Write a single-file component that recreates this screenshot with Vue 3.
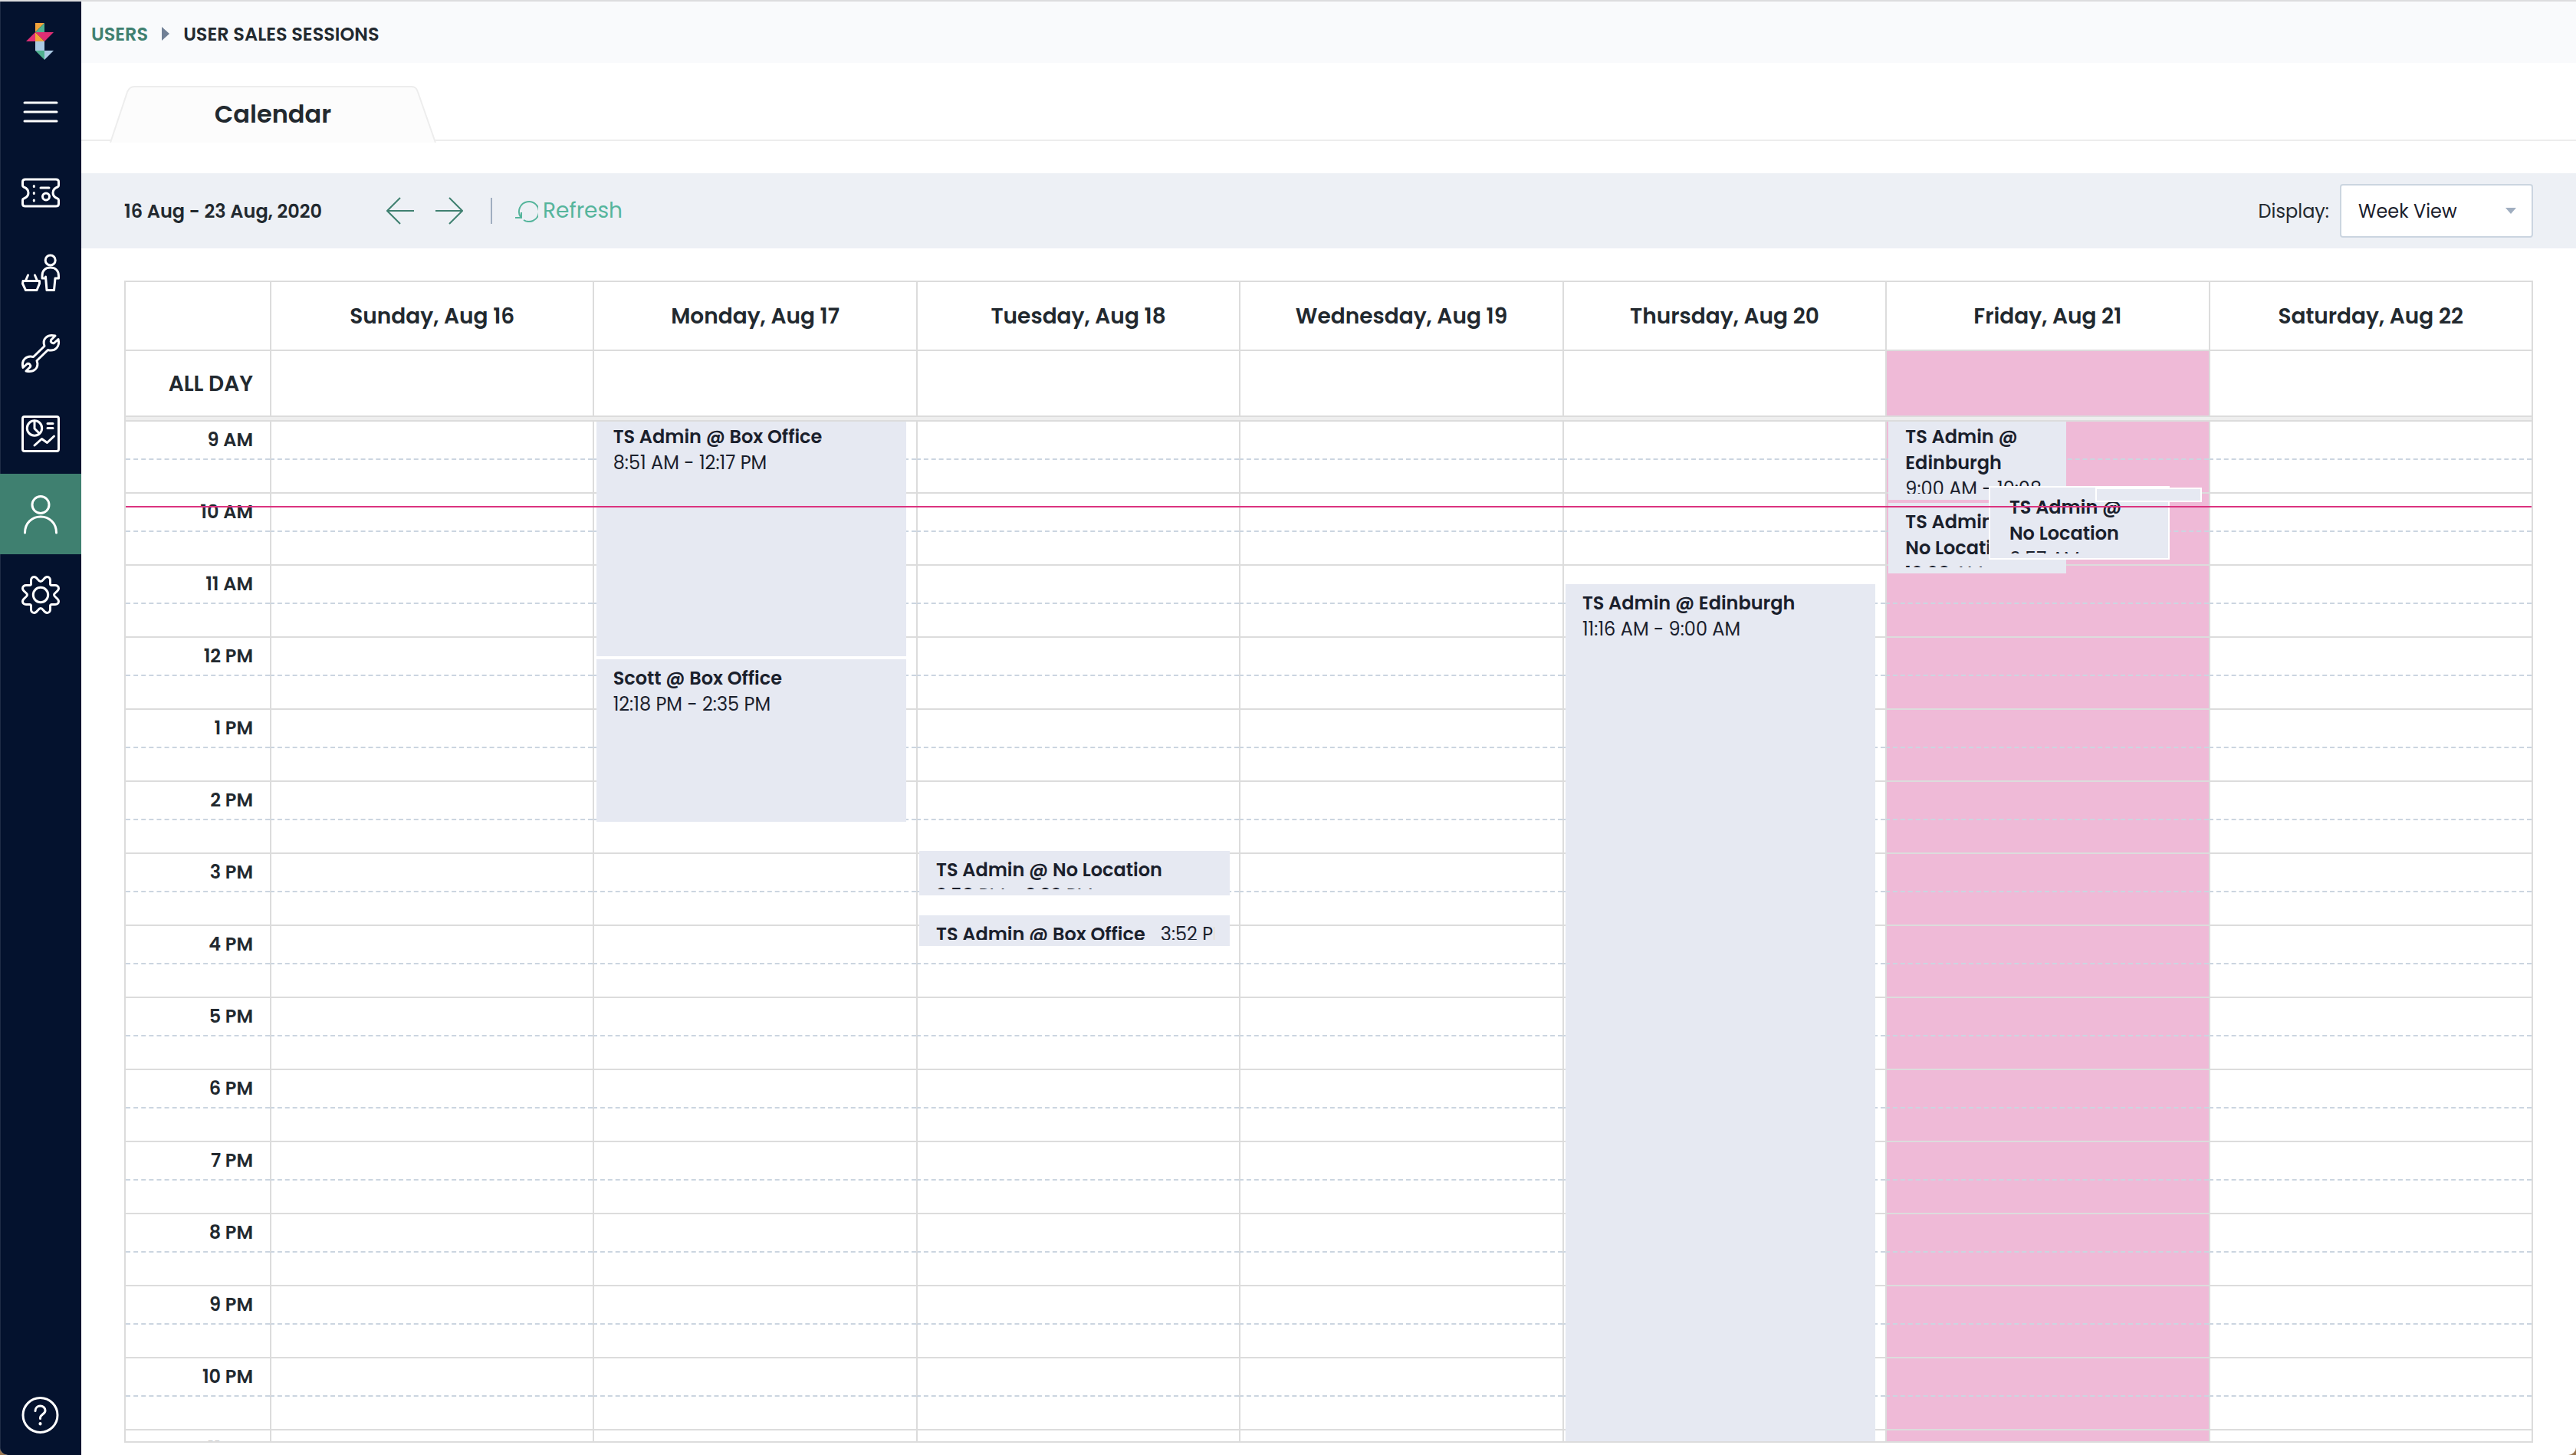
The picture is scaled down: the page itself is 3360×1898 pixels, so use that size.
<template>
  <div class="app-shell">
    <!-- Sidebar -->
    <nav class="sidebar" aria-label="Main">
      <a href="#" class="logo" aria-label="Home">
        <svg width="36" height="48" viewBox="0 0 36 48">
          <path fill="#f2a33a" d="M12 0h12L12 12z" />
          <path fill="#4fb08f" d="M24 0v12H12z" />
          <path fill="#df2e74" d="M12 12v12H0z" />
          <path fill="#df2e74" d="M12 12h24L24 24z" />
          <path fill="#f2a33a" d="M12 12l12 12H12z" />
          <path fill="#abc9e3" d="M12 24h12v12H12z" />
          <path fill="#4fb08f" d="M12 36h12v12z" />
          <path fill="#abc9e3" d="M24 36h12L24 48z" />
        </svg>
      </a>
      <a
        v-for="item in menu"
        :key="item.name"
        href="#"
        class="menu-item"
        :class="{ active: item.name === activeMenu }"
        :aria-label="item.name"
      >
        <svg class="menu-icon" viewBox="0 0 54 54">
          <path v-for="d in item.paths" :key="d" :d="d" />
          <circle v-for="c in item.circles" :key="c.join()" :cx="c[0]" :cy="c[1]" :r="c[2]" />
        </svg>
      </a>
      <a href="#" class="menu-item help" aria-label="Help">
        <svg class="menu-icon" viewBox="0 0 54 54">
          <circle cx="26.500" cy="27" r="22.500" />
          <path d="M20 21.500c0-4 3-6.500 6.500-6.500s6.500 2.500 6.500 6c0 5-6.500 5-6.500 9.500v1" />
          <path d="M26.500 38v.5" class="dot" />
        </svg>
      </a>
    </nav>

    <main class="content">
      <!-- Breadcrumb -->
      <header class="breadcrumb">
        <a href="#" class="breadcrumb-link">USERS</a>
        <span class="breadcrumb-arrow"></span>
        <span>USER SALES SESSIONS</span>
      </header>

      <!-- Tabs -->
      <div class="tabs">
        <button type="button" class="tab">
          <svg class="tab-shape" viewBox="0 0 426 74" preserveAspectRatio="none">
            <path d="M1 74 L23 8 Q26 1 32 1 H394 Q400 1 402 8 L425 74" />
          </svg>
          <span class="tab-label">Calendar</span>
        </button>
      </div>

      <!-- Toolbar -->
      <section class="toolbar">
        <span class="date-range">16 Aug - 23 Aug, 2020</span>
        <button type="button" class="icon-button" aria-label="Previous week">
          <svg width="36" height="36" viewBox="0 0 36 36"><path d="M36 18H2M18 1L1 18l17 17" /></svg>
        </button>
        <button type="button" class="icon-button" aria-label="Next week">
          <svg width="36" height="36" viewBox="0 0 36 36"><path d="M0 18h34M18 1l17 17-17 17" /></svg>
        </button>
        <span class="divider"></span>
        <button type="button" class="refresh">
          <svg width="30" height="30" viewBox="0 0 30 30">
            <path d="M7 23A13 13 0 1 1 11 27" />
            <path d="M8 17v7H0" />
          </svg>
          Refresh
        </button>
        <label for="display" class="display-label">Display:</label>
        <span class="select-wrap">
          <select id="display" v-model="display" class="select">
            <option>Week View</option>
            <option>Day View</option>
          </select>
        </span>
      </section>

      <!-- Scheduler -->
      <section class="scheduler">
        <table class="grid head">
          <thead>
            <tr>
              <td class="time-col"></td>
              <th v-for="day in days" :key="day" scope="col">{{ day }}</th>
            </tr>
          </thead>
          <tbody>
            <tr>
              <th class="time-col" scope="row">ALL DAY</th>
              <td v-for="(day, i) in days" :key="day" :class="{ today: i === today }"></td>
            </tr>
          </tbody>
        </table>

        <div class="scroll-area">
          <table class="grid hours">
            <tbody v-for="hour in hours" :key="hour">
              <tr class="hour-top">
                <th class="time-col" scope="row">{{ hour }}</th>
                <td v-for="(day, i) in days" :key="day" :class="{ today: i === today }"></td>
              </tr>
              <tr class="hour-bottom">
                <td class="time-col"></td>
                <td v-for="(day, i) in days" :key="day" :class="{ today: i === today }"></td>
              </tr>
            </tbody>
          </table>

          <!-- Sessions lie over the hour grid, one lane per day -->
          <div class="lanes">
            <div v-for="(day, i) in days" :key="day" class="lane">
              <article
                v-for="s in sessions.filter((x) => x.day === i)"
                :key="s.top + '-' + s.left"
                class="session"
                :class="{ stacked: s.stacked, inline: s.inline }"
                :style="{ top: s.top + 'px', height: s.height + 'px', left: s.left + '%', width: s.width + '%' }"
              >
                <div v-if="s.title" class="session-text">
                  <strong>{{ s.title }}</strong>
                  <span>{{ s.time }}</span>
                </div>
              </article>
            </div>
          </div>
          <div class="now-line"></div>
        </div>
      </section>
    </main>
  </div>
</template>

<script setup>
import { ref } from 'vue';

const activeMenu = ref('Users');
const display = ref('Week View');

const menu = [
  { name: 'Menu', paths: ['M6 15H48', 'M6 27H48', 'M6 39H48'] },
  {
    name: 'Tickets',
    paths: [
      'M7 10H47Q50.500 10 50.500 13V18Q50.500 19.500 49 20C45 21.500 43 24 43 27.500S45 33.500 49 35Q50.500 35.500 50.500 37V42Q50.500 45 47 45H7Q3.500 45 3.500 42V37Q3.500 35.500 5 35C9 33.500 11 31 11 27.500S9 21.500 5 20Q3.500 19.500 3.500 18V13Q3.500 10 7 10Z',
      'M18.300 18.500v1M18.300 27.500v1M18.300 37v1',
      'M27 21H38'
    ],
    circles: [[34, 32.5, 4.5]]
  },
  {
    name: 'Customers',
    paths: [
      'M33.500 34V32L35 49.500H44.500L46 34H50.500V31C50.500 24 46 20 39.700 20S29 24 29 31V34H33.500',
      'M4 37.500H25.500V41L22 49.500H7.500L3.500 41Z',
      'M10.500 30L7.500 37M19.500 30L22.500 37'
    ],
    circles: [[39.7, 10.5, 6.5]]
  },
  {
    name: 'Tools',
    paths: [
      'M32 17.500C28.500 8 36 1.500 46 4L40.500 9.500C39.500 12 42 14.500 44.500 13.500L50 8.500C52.500 18 46 25 36.500 22.500L22 36.500C25.500 46 18 52.500 8 50L13.500 44.500C14.500 42 12 39.500 9.500 40.500L4 45.500C1.500 36 8 29 17.500 31.500Z'
    ]
  },
  {
    name: 'Reports',
    paths: [
      'M6 4.500H48Q50.500 4.500 50.500 7V47Q50.500 49.500 48 49.500H6Q3.500 49.500 3.500 47V7Q3.500 4.500 6 4.500Z',
      'M19 10V20L24.500 25.500',
      'M36 13.500H43M36 19.500H43',
      'M19 42L28.500 33.500L35.500 38.500L44.500 30'
    ],
    circles: [[19, 19.5, 9.7]]
  },
  {
    name: 'Users',
    paths: ['M6.500 51C6.500 38 16 30 27 30S47.500 38 47.500 51'],
    circles: [[27, 14.5, 11]]
  },
  {
    name: 'Settings',
    paths: [
      'M27 9.500C23.500 9.500 23 3.500 18.500 3.500C15.500 3.500 14.500 6 14.500 8V12.500Q14.500 14.500 12.500 14.500H8C5.500 14.500 3.500 16 3.500 18.500C3.500 23 9.500 23.500 9.500 27C9.500 30.500 3.500 31 3.500 35.500C3.500 38 5.500 39.500 8 39.500H12.500Q14.500 39.500 14.500 41.500V46C14.500 48 15.500 50.500 18.500 50.500C23 50.500 23.500 44.500 27 44.500C30.500 44.500 31 50.500 35.500 50.500C38.500 50.500 39.500 48 39.500 46V41.500Q39.500 39.500 41.500 39.500H46C48.500 39.500 50.500 38 50.500 35.500C50.500 31 44.500 30.500 44.500 27C44.500 23.500 50.500 23 50.500 18.500C50.500 16 48.500 14.500 46 14.500H41.500Q39.500 14.500 39.500 12.500V8C39.500 6 38.500 3.500 35.500 3.500C31 3.500 30.500 9.500 27 9.500Z'
    ],
    circles: [[27, 27, 9.7]]
  }
];

const days = [
  'Sunday, Aug 16',
  'Monday, Aug 17',
  'Tuesday, Aug 18',
  'Wednesday, Aug 19',
  'Thursday, Aug 20',
  'Friday, Aug 21',
  'Saturday, Aug 22'
];
const today = 5;

const hours = [
  '9 AM', '10 AM', '11 AM', '12 PM', '1 PM', '2 PM', '3 PM', '4 PM',
  '5 PM', '6 PM', '7 PM', '8 PM', '9 PM', '10 PM', '11 PM'
];

// top and height run along the hour grid, left and width are shares of the day lane
const sessions = [
  { day: 1, title: 'TS Admin @ Box Office', time: '8:51 AM - 12:17 PM', top: -5, height: 311, left: 1, width: 96 },
  { day: 1, title: 'Scott @ Box Office', time: '12:18 PM - 2:35 PM', top: 310, height: 212, left: 1, width: 96 },
  { day: 2, title: 'TS Admin @ No Location', time: '2:58 PM - 3:32 PM', top: 560, height: 58, left: 1, width: 96 },
  { day: 2, title: 'TS Admin @ Box Office', time: '3:52 PM - 4:15 PM', top: 644, height: 40, left: 1, width: 96, inline: true },
  { day: 4, title: 'TS Admin @ Edinburgh', time: '11:16 AM - 9:00 AM', top: 212, height: 1200, left: 1, width: 96 },
  { day: 5, title: 'TS Admin @ Edinburgh', time: '9:00 AM - 10:08 AM', top: -5, height: 107, left: 1, width: 55 },
  { day: 5, title: 'TS Admin @ No\u00a0Location', time: '10:08 AM - 10:56\u00a0AM', top: 106, height: 92, left: 1, width: 55 },
  { day: 5, title: 'TS Admin @ No\u00a0Location', time: '9:57 AM - 10:55\u00a0AM', top: 84, height: 96, left: 32, width: 56, stacked: true },
  { day: 5, title: '', time: '', top: 86, height: 18, left: 65, width: 33, stacked: true }
];
</script>

<style>
html {
  background: #9a7650;
}

body {
  margin: 0;
}
</style>

<style scoped>
* {
  box-sizing: border-box;
}

.app-shell {
  display: flex;
  height: 100vh;
  border-top: 2px solid #dcdcde;
  border-radius: 0 0 10px 10px;
  overflow: hidden;
  background: #fff;
  color: #22292f;
  font-family: Poppins, Inter, 'Liberation Sans', sans-serif;
  font-size: 24px;
}

button {
  padding: 0;
  border: none;
  background: none;
  color: inherit;
  font: inherit;
  cursor: pointer;
}

/* Sidebar */
.sidebar {
  flex: none;
  display: flex;
  flex-direction: column;
  width: 106px;
  background: #04122e;
  box-shadow: inset 1px 0 #1f2c45;
}

.logo {
  display: flex;
  justify-content: center;
  padding: 28px 2px 15px 0;
}

.menu-item {
  display: flex;
  align-items: center;
  justify-content: center;
  height: 105px;
}

.menu-item.active {
  background: #3f8070;
}

.menu-item.help {
  margin-top: auto;
}

.menu-icon {
  width: 54px;
  height: 54px;
  fill: none;
  stroke: #fff;
  stroke-width: 3;
  stroke-linecap: round;
  stroke-linejoin: round;
}

.menu-icon .dot {
  stroke-width: 4;
}

/* Content */
.content {
  flex: 1;
  min-width: 0;
  display: flex;
  flex-direction: column;
}

.breadcrumb {
  display: flex;
  align-items: center;
  gap: 18px;
  height: 80px;
  padding: 4px 13px 0;
  background: #f9fafc;
  font-weight: 600;
}

.breadcrumb-link {
  color: #3f8070;
  text-decoration: none;
}

.breadcrumb-arrow {
  border-left: 10px solid #718096;
  border-top: 9px solid transparent;
  border-bottom: 9px solid transparent;
}

.tabs {
  height: 102px;
  padding: 30px 0 0 37px;
  border-bottom: 2px solid #ededed;
}

.tab {
  position: relative;
  width: 426px;
  height: 74px;
  font-size: 32px;
  font-weight: 600;
}

.tab-shape {
  position: absolute;
  inset: 0;
  width: 100%;
  height: 100%;
  fill: #fcfcfc;
  stroke: #ededed;
  stroke-width: 2;
}

.tab-label {
  position: relative;
}

/* Toolbar */
.toolbar {
  display: flex;
  align-items: center;
  height: 98px;
  margin-top: 42px;
  padding: 0 56px;
  background: #edf0f5;
}

.date-range {
  margin-right: 84px;
  font-weight: 600;
}

.icon-button {
  display: flex;
  margin-right: 28px;
}

.icon-button svg {
  fill: none;
  stroke: #3f8070;
  stroke-width: 2;
}

.divider {
  width: 2px;
  height: 34px;
  margin: 0 30px 0 8px;
  background: #a0aec0;
}

.refresh {
  display: flex;
  align-items: center;
  gap: 6px;
  color: #56b59c;
  font-size: 28px;
}

.refresh svg {
  fill: none;
  stroke: #56b59c;
  stroke-width: 2;
}

.display-label {
  margin-left: auto;
  margin-right: 14px;
}

.select-wrap {
  position: relative;
}

.select-wrap::after {
  content: '';
  position: absolute;
  top: 31px;
  right: 22px;
  border-top: 8px solid #a0aec0;
  border-left: 7px solid transparent;
  border-right: 7px solid transparent;
  pointer-events: none;
}

.select {
  appearance: none;
  display: block;
  width: 252px;
  height: 70px;
  padding: 0 22px;
  border: 2px solid #cbd5e0;
  border-radius: 4px;
  background: #fff;
  color: #1a202c;
  font: inherit;
}

/* Scheduler */
.scheduler {
  flex: 1;
  min-height: 0;
  display: flex;
  flex-direction: column;
  margin: 42px 56px 16px;
  border: 2px solid #dcdcdc;
}

.grid {
  width: 100%;
  table-layout: fixed;
  border-collapse: separate;
  border-spacing: 0;
}

.grid th,
.grid td {
  padding: 0;
  border-left: 2px solid #dcdcdc;
  border-bottom: 2px solid #dcdcdc;
  font-weight: 600;
}

.grid .time-col {
  width: 188px;
  padding-right: 22px;
  border-left: none;
  text-align: right;
}

.grid .today {
  background: #efbad7;
  background-clip: padding-box;
}

.head {
  flex: none;
  border-bottom: 4px solid #eee;
  font-size: 28px;
}

.head tr {
  height: 90px;
}

.head th {
  padding-top: 2px;
}

.head tbody tr {
  height: 86px;
}

.scroll-area {
  position: relative;
  flex: 1;
  min-height: 0;
  border-top: 2px solid #dcdcdc;
  overflow: hidden;
}

.hours .hour-top {
  height: 50px;
}

.hours .hour-bottom {
  height: 44px;
}

.hours .hour-top th,
.hours .hour-top td {
  border-bottom: 2px dashed #cbd5e0;
}

.hours .hour-top .today {
  background-clip: border-box;
}

.hours th {
  line-height: 32px;
}

.lanes {
  position: absolute;
  inset: 0 0 0 188px;
  display: grid;
  grid-template-columns: repeat(7, 1fr);
}

.lane {
  position: relative;
}

.session {
  position: absolute;
  padding: 8px 20px 8px 22px;
  background: #e6e9f2;
  color: #1a202c;
  line-height: 34px;
}

.session.stacked {
  padding: 9px 20px 6px 25px;
  border: 2px solid #fff;
}

.session-text {
  height: 100%;
  overflow: hidden;
}

.session strong {
  display: block;
  font-weight: 600;
}

.session.inline .session-text {
  white-space: nowrap;
}

.session.inline strong {
  display: inline;
  margin-right: 20px;
}

.now-line {
  position: absolute;
  top: 110px;
  left: 0;
  right: 0;
  height: 2px;
  background: #db3380;
}
</style>
